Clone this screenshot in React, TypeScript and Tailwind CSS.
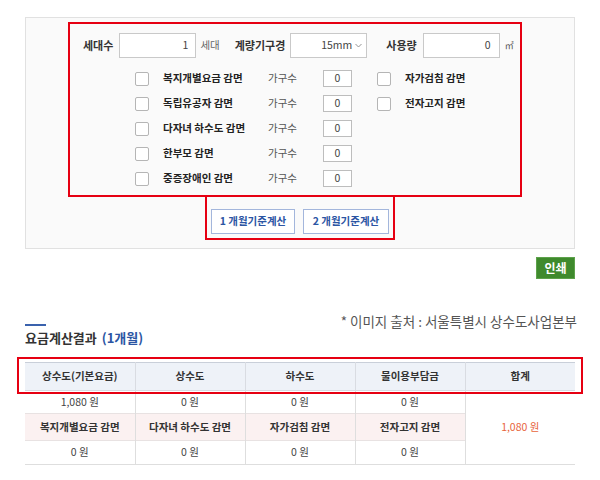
import React from "react";

const leftRows = [
  "복지개별요금 감면",
  "독립유공자 감면",
  "다자녀 하수도 감면",
  "한부모 감면",
  "중증장애인 감면",
];
const rightRows = ["자가검침 감면", "전자고지 감면"];

function Check() {
  return <span className="block w-[14px] h-[14px] border border-[#b5b5b5] rounded-[2px] bg-white shrink-0" />;
}

export default function App() {
  return (
    <div className="w-[600px] h-[480px] bg-white text-[#333] font-['Noto_Sans_CJK_KR','Noto_Sans',sans-serif] overflow-hidden">
      <div className="pt-[17px] px-[25px]">
        <div className="h-[232px] border border-[#e1e1e1] bg-[#fafafa] pt-[4px] flex flex-col">
          <div className="ml-[42px] w-[454px] h-[175px] border-2 border-[#e60012] pt-[9px]">
            <div className="flex items-center h-[25px] pl-[13px] text-[11px] leading-none">
              <span className="font-bold">세대수</span>
              <div className="ml-[6px] w-[77px] h-[25px] border border-[#c9c9c9] bg-white flex items-center justify-end pr-[7px] text-[10.5px] text-[#444]">1</div>
              <span className="ml-[4px] text-[#666] text-[10.5px]">세대</span>
              <span className="ml-[15px] font-bold">계량기구경</span>
              <div className="ml-[5px] w-[77px] h-[25px] border border-[#c9c9c9] bg-white flex items-center justify-end pr-[4px] text-[10.5px] text-[#444] gap-[3px]">
                <span>15mm</span>
                <svg width="7" height="5" viewBox="0 0 7 5"><path d="M0.5 1 L3.5 4 L6.5 1" fill="none" stroke="#888" strokeWidth="0.9" /></svg>
              </div>
              <span className="ml-[19px] font-bold">사용량</span>
              <div className="ml-[6px] w-[77px] h-[25px] border border-[#c9c9c9] bg-white flex items-center justify-end pr-[8px] text-[10.5px] text-[#444]">0</div>
              <span className="ml-[5px] text-[9px] text-[#555]">㎡</span>
            </div>
            <div className="mt-[8px] pl-[65px] flex text-[10.5px] leading-none">
              <div className="w-[242px] flex flex-col">
                {leftRows.map((r) => (
                  <div key={r} className="h-[25px] flex items-center">
                    <Check />
                    <span className="ml-[14px] w-[105px] font-bold text-[#222]">{r}</span>
                    <span className="w-[55px] text-[#555]">가구수</span>
                    <span className="w-[29px] h-[17px] border border-[#bdbdbd] bg-white flex items-center justify-center text-[#444]">0</span>
                  </div>
                ))}
              </div>
              <div className="flex flex-col">
                {rightRows.map((r) => (
                  <div key={r} className="h-[25px] flex items-center">
                    <Check />
                    <span className="ml-[14px] font-bold text-[#222]">{r}</span>
                  </div>
                ))}
              </div>
            </div>
          </div>
          <div className="ml-[179px] -mt-[2px] w-[190px] h-[45px] border-2 border-[#e60012] pt-[12px] pl-[4px] flex gap-[8px]">
            <button className="w-[84px] h-[25px] border border-[#a3b6dc] bg-white text-[#2b55a3] font-bold text-[10.5px] leading-none">1 개월기준계산</button>
            <button className="w-[86px] h-[25px] border border-[#a3b6dc] bg-white text-[#2b55a3] font-bold text-[10.5px] leading-none">2 개월기준계산</button>
          </div>
        </div>
      </div>

      <div className="px-[25px] mt-[8px] flex justify-end">
        <button className="w-[39px] h-[22px] bg-[#3f8a2d] border border-[#5da24a] text-white font-bold text-[12px] leading-none">인쇄</button>
      </div>

      <div className="px-[23px] mt-[34px] flex justify-between items-start">
        <div className="pl-[2px] pt-[11px]">
          <div className="w-[21px] h-[2px] bg-[#3a62ad]" />
          <div className="mt-[4px] text-[13px] leading-[15px] font-bold text-[#333]">
            요금계산결과 <span className="ml-[2px] text-[#2b55a3]">(1개월)</span>
          </div>
        </div>
        <div className="text-[13.5px] leading-[16px] text-[#555]">* 이미지 출처 : 서울특별시 상수도사업본부</div>
      </div>

      <div className="relative ml-[25px] mt-[17px] w-[550px]">
        <table className="w-[550px] table-fixed border-collapse text-[10.5px] leading-none">
          <thead>
            <tr className="h-[28px] bg-[#eef2f8] border-t border-[#c9cfd9] border-b border-b-[#d6dae2]">
              {["상수도(기본요금)", "상수도", "하수도", "물이용부담금", "합계"].map((h, i) => (
                <th key={h} className={`font-bold text-[#333] ${i > 0 ? "border-l border-[#d9dce2]" : ""}`}>{h}</th>
              ))}
            </tr>
          </thead>
          <tbody>
            <tr className="h-[23px]">
              {["1,080 원", "0 원", "0 원", "0 원"].map((v, i) => (
                <td key={i} className={`text-center text-[#444] ${i > 0 ? "border-l border-[#dedede]" : ""}`}>{v}</td>
              ))}
              <td rowSpan={3} className="border-l border-[#dedede] border-b border-b-[#dedede] text-center text-[#e8643c]">1,080 원</td>
            </tr>
            <tr className="h-[27px] bg-[#fbf1f1] border-t border-b border-[#e8e2e2]">
              {["복지개별요금 감면", "다자녀 하수도 감면", "자가검침 감면", "전자고지 감면"].map((v, i) => (
                <td key={v} className={`text-center font-bold text-[#333] ${i > 0 ? "border-l border-[#dedede]" : ""}`}>{v}</td>
              ))}
            </tr>
            <tr className="h-[24px] border-b border-[#dedede]">
              {["0 원", "0 원", "0 원", "0 원"].map((v, i) => (
                <td key={i} className={`text-center text-[#444] ${i > 0 ? "border-l border-[#dedede]" : ""}`}>{v}</td>
              ))}
            </tr>
          </tbody>
        </table>
        <div className="absolute -left-[8px] -top-[5px] w-[566px] h-[37px] border-2 border-[#e60012] pointer-events-none" />
      </div>
    </div>
  );
}
